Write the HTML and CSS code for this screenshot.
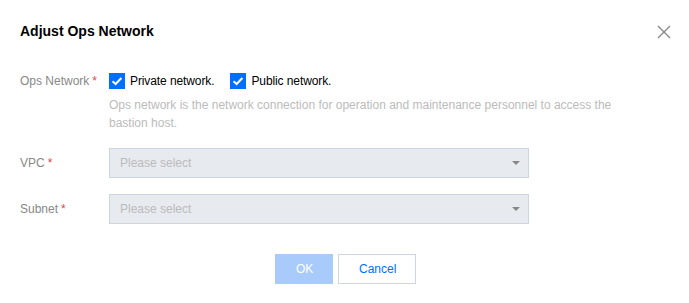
FILE: index.html
```html
<!DOCTYPE html>
<html lang="en">
<head>
  <meta charset="UTF-8">
  <title>Adjust Ops Network</title>
  <meta name="viewport" content="width=device-width, initial-scale=1.0">
  <link rel="stylesheet" href="styles.css">
</head>
<body>

  <div class="dialog">
    <div class="dialog-head">
      <h3 class="dialog-title">Adjust Ops Network</h3>
      <button class="close-btn" aria-label="Close">
        <svg width="14" height="14" viewBox="0 0 14 14">
          <path d="M1 1 L13 13 M13 1 L1 13" stroke="#888" stroke-width="1.4" fill="none"/>
        </svg>
      </button>
    </div>

    <div class="form">
      <div class="form-row row-ops">
        <label class="form-label">Ops Network<span class="req">*</span></label>
        <div class="form-ctrl">
          <div class="check-group">
            <label class="check">
              <span class="check-box">
                <svg width="16" height="16" viewBox="0 0 16 16">
                  <path d="M3.5 8.2 L6.6 11 L12.4 5" stroke="#fff" stroke-width="2" fill="none"/>
                </svg>
              </span>
              Private network.
            </label>
            <label class="check">
              <span class="check-box">
                <svg width="16" height="16" viewBox="0 0 16 16">
                  <path d="M3.5 8.2 L6.6 11 L12.4 5" stroke="#fff" stroke-width="2" fill="none"/>
                </svg>
              </span>
              Public network.
            </label>
          </div>
          <p class="help">Ops network is the network connection for operation and maintenance personnel to access the bastion host.</p>
        </div>
      </div>

      <div class="form-row">
        <label class="form-label">VPC<span class="req">*</span></label>
        <div class="form-ctrl">
          <div class="select is-disabled">
            <span class="placeholder">Please select</span>
            <span class="caret"></span>
          </div>
        </div>
      </div>

      <div class="form-row">
        <label class="form-label">Subnet<span class="req">*</span></label>
        <div class="form-ctrl">
          <div class="select is-disabled">
            <span class="placeholder">Please select</span>
            <span class="caret"></span>
          </div>
        </div>
      </div>
    </div>

    <div class="dialog-foot">
      <button class="btn btn-primary" disabled>OK</button>
      <button class="btn btn-weak">Cancel</button>
    </div>
  </div>

</body>
</html>
```

FILE: styles.css
```css
body {
  margin: 0;
  font-family: "Segoe UI", "Liberation Sans", Arial, sans-serif;
  font-size: 12px;
  color: #000;
  background: #fff;
}

.dialog {
  width: 689px;
  height: 303px;
  box-sizing: border-box;
  padding: 20px 18px 19px 20px;
}

.dialog-head {
  display: flex;
  justify-content: space-between;
  align-items: center;
  height: 22px;
}

.dialog-title {
  margin: 0;
  font-size: 14px;
  font-weight: bold;
  line-height: 22px;
}

.close-btn {
  background: none;
  border: none;
  padding: 0;
  width: 14px;
  height: 14px;
  cursor: pointer;
  margin-top: 2px;
}

.close-btn svg {
  display: block;
}

.form {
  margin-top: 24px;
}

.form-row {
  display: flex;
  margin-bottom: 16px;
}

.form-label {
  width: 89px;
  flex: 0 0 89px;
  line-height: 30px;
  color: #888;
  white-space: nowrap;
}

.req {
  color: #e54545;
  margin-left: 3px;
}

.form-ctrl {
  flex: 1;
}

.check-group {
  display: flex;
  align-items: center;
  height: 30px;
}

.check {
  display: flex;
  align-items: center;
  margin-right: 16px;
  line-height: 16px;
  letter-spacing: -0.1px;
}

.check-box {
  width: 16px;
  height: 16px;
  background: #006eff;
  margin-right: 5px;
}

.check-box svg {
  display: block;
}

.help {
  margin: 0;
  width: 530px;
  color: #bbb;
  line-height: 18px;
}

.select {
  width: 420px;
  height: 30px;
  box-sizing: border-box;
  border: 1px solid #cfd5de;
  padding: 0 10px;
  display: flex;
  align-items: center;
  justify-content: space-between;
}

.select.is-disabled {
  background: #e7eaef;
}

.placeholder {
  color: #bbb;
}

.caret {
  width: 0;
  height: 0;
  border-left: 4.5px solid transparent;
  border-right: 4.5px solid transparent;
  border-top: 4px solid #888;
  margin-right: -2px;
}

.dialog-foot {
  display: flex;
  justify-content: center;
  gap: 5px;
  margin-top: 30px;
}

.btn {
  height: 30px;
  box-sizing: border-box;
  padding: 0 20px;
  font-family: inherit;
  font-size: 12px;
  border: 1px solid transparent;
  cursor: pointer;
}

.btn-primary {
  width: 58px;
  background: #a9cbfb;
  border-color: #a9cbfb;
  color: #fff;
}

.btn-primary:disabled {
  cursor: not-allowed;
}

.btn-weak {
  width: 78px;
  background: #fff;
  border-color: #cfd5de;
  color: #006eff;
}
```
